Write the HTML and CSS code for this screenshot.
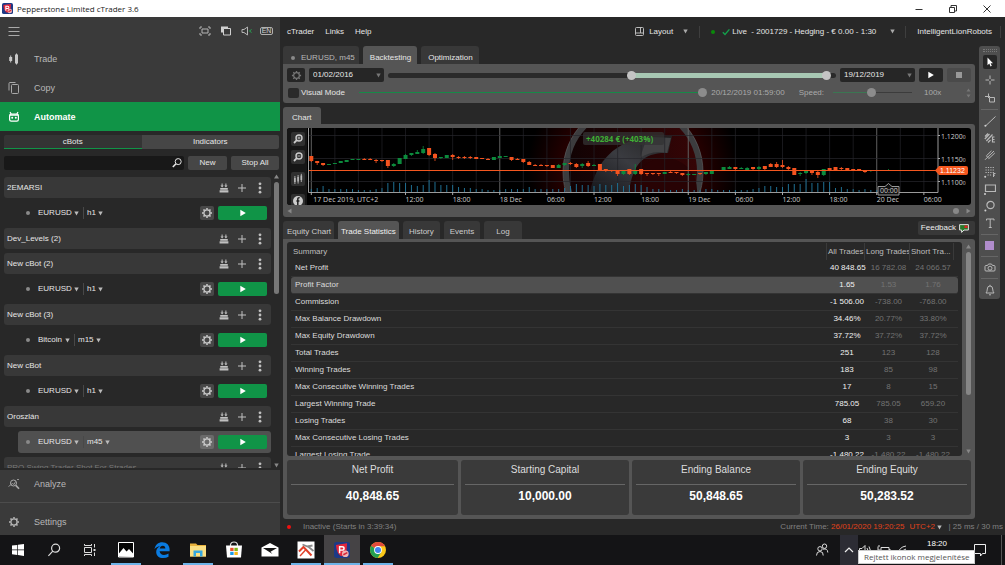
FILE: index.html
```
<!DOCTYPE html>
<html lang="en">
<head>
<meta charset="utf-8">
<title>Pepperstone Limited cTrader 3.6</title>
<link rel="stylesheet" href="styles.css">
</head>
<body>
<svg class="defs" aria-hidden="true">
  <symbol id="down" viewBox="0 0 5 5"><path d="M0.3 0.6H4.7L2.5 4.6Z" fill="currentColor"/></symbol>
  <symbol id="play" viewBox="0 0 6 8"><path d="M0.3 0.8L5.8 4L0.3 7.2Z" fill="currentColor"/></symbol>
  <symbol id="gear" viewBox="0 0 12 12"><g fill="none" stroke="currentColor"><circle cx="6" cy="6" r="3.1" stroke-width="1.3"/><path d="M6 1V2.6M6 9.4V11M1 6H2.6M9.4 6H11M2.5 2.5L3.6 3.6M8.4 8.4L9.5 9.5M9.5 2.5L8.4 3.6M3.6 8.4L2.5 9.5" stroke-width="1.5"/></g></symbol>
  <symbol id="bots" viewBox="0 0 10 10"><g fill="currentColor"><path d="M2.6 0.5H3.6V2.6H4.7L3.1 4.6L1.5 2.6H2.6ZM6.4 0.5H7.4V2.6H8.5L6.9 4.6L5.3 2.6H6.4Z"/><path d="M1.2 5H8.8V6.8H1.2ZM0.6 7.2H9.4V9.4H0.6Z"/></g></symbol>
  <symbol id="plus" viewBox="0 0 10 10"><path d="M5 1V9M1 5H9" stroke="currentColor" fill="none"/></symbol>
  <symbol id="dots" viewBox="0 0 4 12"><g fill="currentColor"><circle cx="2" cy="1.8" r="1.4"/><circle cx="2" cy="6" r="1.4"/><circle cx="2" cy="10.2" r="1.4"/></g></symbol>
  <symbol id="find" viewBox="0 0 12 12"><g fill="none" stroke="currentColor"><circle cx="7.2" cy="4.6" r="3"/><path d="M5 6.8L1.8 10" stroke-width="1.6"/></g></symbol>
  <symbol id="logo" viewBox="0 0 12 12"><rect width="12" height="12" rx="2" fill="#1d3a86"/><path d="M1.5 2.2L9.8 1L9.4 6.5C8.8 8.6 7 10 5.4 10.6C3 9.4 1.8 6.4 1.5 2.2Z" fill="#e3263b"/><path d="M4.2 8.4V3.6H6.1C8 3.6 8 6.1 6.1 6.1H4.4" fill="none" stroke="#fff" stroke-width="1.1"/><circle cx="8.5" cy="8.8" r="2.5" fill="#f0b4b4"/><path d="M7 9.6L10 8" stroke="#d6283a" stroke-width="1.2"/></symbol>
</svg>

<header class="titlebar">
  <svg class="s11"><use href="#logo"/></svg>
  <h1>Pepperstone Limited cTrader 3.6</h1>
  <div class="winbtns">
    <button type="button" aria-label="Minimize"><svg viewBox="0 0 10 10"><path d="M1.5 5.5H8.5"/></svg></button>
    <button type="button" aria-label="Restore"><svg viewBox="0 0 10 10"><path d="M1.5 3.5H6.5V8.5H1.5ZM3 3.5V1.5H8.5V7H6.5"/></svg></button>
    <button type="button" aria-label="Close"><svg viewBox="0 0 10 10"><path d="M1.5 1.5L8.5 8.5M8.5 1.5L1.5 8.5"/></svg></button>
  </div>
</header>

<div class="app">
  <aside class="sidebar">
    <div class="quick">
      <button type="button" aria-label="Menu"><svg viewBox="0 0 12 10"><path d="M0.5 1.5H11.5M0.5 5.5H11.5M0.5 9.5H11.5" stroke="#aaa"/></svg></button>
      <span class="grow"></span>
      <button type="button" aria-label="Full screen"><svg viewBox="0 0 12 10"><g fill="none" stroke="#b4b4b4"><path d="M3 3H9V7H3Z"/><path d="M1 3V1H3M9 1H11V3M11 7V9H9M3 9H1V7"/></g></svg></button>
      <button type="button" aria-label="Detach"><svg viewBox="0 0 12 10"><path d="M1 0.5H8V6.5H1Z" fill="#d0d0d0"/><path d="M3.5 2.5H10.5V9H3.5Z" fill="#3a3a3a" stroke="#d0d0d0"/></svg></button>
      <button type="button" aria-label="Sound"><svg viewBox="0 0 12 10"><path d="M1 3.5H3L6.5 1V9L3 6.5H1Z" fill="none" stroke="#b4b4b4"/><path d="M10.5 3Q8 5 10.5 7M8.4 4.3V5.7" fill="none" stroke="#2b8c4c"/></svg></button>
      <button type="button" class="lang">EN</button>
    </div>
    <nav class="nav">
      <a href="#"><svg viewBox="0 0 12 12"><path d="M1.2 4H4.2V8H1.2ZM2.2 2.5H3.2V9.5H2.2ZM7 1.5H10V10.5H7ZM8 0.5H9V11.5H8Z" fill="#c8c8c8"/></svg>Trade</a>
      <a href="#"><svg viewBox="0 0 12 12"><g fill="none" stroke="#a8a8a8"><rect x="3.5" y="2.5" width="7" height="9" rx="1"/><path d="M1 8.5V1.5Q1 0.5 2 0.5H7.5"/></g></svg>Copy</a>
      <a href="#" class="on"><svg viewBox="0 0 12 12"><rect x="1.6" y="3.2" width="8.8" height="7" rx="1.6" fill="none" stroke="#fff" stroke-width="1.2"/><path d="M2 1.2L3.2 3M10 1.2L8.8 3M1.8 4.2H10.2" stroke="#fff" stroke-width="1.2"/><circle cx="4.2" cy="6.8" r="1" fill="#fff"/><circle cx="7.8" cy="6.8" r="1" fill="#fff"/></svg>Automate</a>
    </nav>

    <section class="bots">
      <div class="segs"><button type="button" class="on">cBots</button><button type="button">Indicators</button></div>
      <div class="searchrow">
        <label class="search"><input type="search" aria-label="Search cBots"><svg><use href="#find"/></svg></label>
        <button type="button" class="b-new">New</button><button type="button" class="b-stop">Stop All</button>
      </div>
      <div class="scroller">
        <div class="list">
          <div class="bot"><span>2EMARSI</span><button type="button" aria-label="Build"><svg><use href="#bots"/></svg></button><button type="button" aria-label="Add instance"><svg><use href="#plus"/></svg></button><button type="button" aria-label="More"><svg><use href="#dots"/></svg></button></div>
          <div class="inst"><i class="dot"></i><label class="dd"><select aria-label="Symbol"><option>EURUSD</option></select><svg><use href="#down"/></svg></label><label class="dd tf"><select aria-label="Timeframe"><option>h1</option></select><svg><use href="#down"/></svg></label><button type="button" class="gear" aria-label="Settings"><svg><use href="#gear"/></svg></button><button type="button" class="run" aria-label="Start"><svg><use href="#play"/></svg></button></div>
          <div class="bot"><span>Dev_Levels (2)</span><button type="button" aria-label="Build"><svg><use href="#bots"/></svg></button><button type="button" aria-label="Add instance"><svg><use href="#plus"/></svg></button><button type="button" aria-label="More"><svg><use href="#dots"/></svg></button></div>
          <div class="bot"><span>New cBot (2)</span><button type="button" aria-label="Build"><svg><use href="#bots"/></svg></button><button type="button" aria-label="Add instance"><svg><use href="#plus"/></svg></button><button type="button" aria-label="More"><svg><use href="#dots"/></svg></button></div>
          <div class="inst"><i class="dot"></i><label class="dd"><select aria-label="Symbol"><option>EURUSD</option></select><svg><use href="#down"/></svg></label><label class="dd tf"><select aria-label="Timeframe"><option>h1</option></select><svg><use href="#down"/></svg></label><button type="button" class="gear" aria-label="Settings"><svg><use href="#gear"/></svg></button><button type="button" class="run" aria-label="Start"><svg><use href="#play"/></svg></button></div>
          <div class="bot"><span>New cBot (3)</span><button type="button" aria-label="Build"><svg><use href="#bots"/></svg></button><button type="button" aria-label="Add instance"><svg><use href="#plus"/></svg></button><button type="button" aria-label="More"><svg><use href="#dots"/></svg></button></div>
          <div class="inst"><i class="dot"></i><label class="dd"><select aria-label="Symbol"><option>Bitcoin</option></select><svg><use href="#down"/></svg></label><label class="dd tf"><select aria-label="Timeframe"><option>m15</option></select><svg><use href="#down"/></svg></label><button type="button" class="gear" aria-label="Settings"><svg><use href="#gear"/></svg></button><button type="button" class="run" aria-label="Start"><svg><use href="#play"/></svg></button></div>
          <div class="bot"><span>New cBot</span><button type="button" aria-label="Build"><svg><use href="#bots"/></svg></button><button type="button" aria-label="Add instance"><svg><use href="#plus"/></svg></button><button type="button" aria-label="More"><svg><use href="#dots"/></svg></button></div>
          <div class="inst"><i class="dot"></i><label class="dd"><select aria-label="Symbol"><option>EURUSD</option></select><svg><use href="#down"/></svg></label><label class="dd tf"><select aria-label="Timeframe"><option>h1</option></select><svg><use href="#down"/></svg></label><button type="button" class="gear" aria-label="Settings"><svg><use href="#gear"/></svg></button><button type="button" class="run" aria-label="Start"><svg><use href="#play"/></svg></button></div>
          <div class="bot"><span>Oroszlán</span><button type="button" aria-label="Build"><svg><use href="#bots"/></svg></button><button type="button" aria-label="Add instance"><svg><use href="#plus"/></svg></button><button type="button" aria-label="More"><svg><use href="#dots"/></svg></button></div>
          <div class="inst sel"><i class="dot"></i><label class="dd"><select aria-label="Symbol"><option>EURUSD</option></select><svg><use href="#down"/></svg></label><label class="dd tf"><select aria-label="Timeframe"><option>m45</option></select><svg><use href="#down"/></svg></label><button type="button" class="gear" aria-label="Settings"><svg><use href="#gear"/></svg></button><button type="button" class="run" aria-label="Start"><svg><use href="#play"/></svg></button></div>
          <div class="bot faded"><span>PRO Swing Trader Shot For Strades</span><button type="button" aria-label="Build"><svg><use href="#bots"/></svg></button><button type="button" aria-label="Add instance"><svg><use href="#plus"/></svg></button><button type="button" aria-label="More"><svg><use href="#dots"/></svg></button></div>
        </div>
        <div class="vbar"><svg viewBox="0 0 5 5"><path d="M0 4.5L2.5 0.5L5 4.5Z"/></svg><i class="side-thumb"></i><span class="grow"></span><svg><use href="#down"/></svg></div>
      </div>
    </section>

    <nav class="nav low">
      <a href="#" class="analyze"><svg viewBox="0 0 12 12"><g fill="none" stroke="#aaa"><circle cx="5.5" cy="5" r="3"/><path d="M7.8 7.4L11 10.8" stroke-width="1.6"/><path d="M0.5 8.5L4.5 5.5L6 6.5L7.5 3.5M9 1.5H11" stroke-width="0.8"/></g></svg>Analyze</a>
      <a href="#" class="settings"><svg><use href="#gear"/></svg>Settings</a>
    </nav>
  </aside>

  <main>
    <div class="menubar">
      <button type="button">cTrader</button><button type="button">Links</button><button type="button">Help</button>
      <span class="grow"></span>
      <button type="button" class="layout"><svg class="s9" viewBox="0 0 9 9"><path d="M0.5 1.5Q0.5 0.5 1.5 0.5H7.5Q8.5 0.5 8.5 1.5V7.5Q8.5 8.5 7.5 8.5H1.5Q0.5 8.5 0.5 7.5ZM5.5 0.5V6H0.5M5.5 6H8.5" fill="none" stroke="#bbb"/></svg>Layout<svg class="s5"><use href="#down"/></svg></button>
      <button type="button" class="account"><i class="live"></i><svg class="s8" viewBox="0 0 8 8"><path d="M0.8 4.2L3 6.4L7.4 1.4" fill="none" stroke="#14a04c" stroke-width="1.4"/></svg><span>Live &nbsp;- 2001729 - Hedging - € 0.00 - 1:30</span><svg class="s5"><use href="#down"/></svg></button>
      <button type="button" class="user">IntelligentLionRobots</button>
    </div>

    <div class="work">
      <div class="content">
        <div class="tabs">
          <button type="button" class="sym"><i class="dot"></i>EURUSD, m45</button><button type="button" class="on">Backtesting</button><button type="button">Optimization</button>
        </div>
        <section class="panel test">
          <div class="row">
            <button type="button" class="dark w18" aria-label="Test settings"><svg class="s11 dim"><use href="#gear"/></svg></button>
            <label class="date"><select aria-label="From date"><option>01/02/2016</option></select><svg class="s5"><use href="#down"/></svg></label>
            <div class="period"><input type="range" aria-label="Start of period" min="0" max="1000" value="544"><input type="range" aria-label="End of period" min="0" max="1000" value="988"></div>
            <label class="date"><select aria-label="To date"><option>19/12/2019</option></select><svg class="s5"><use href="#down"/></svg></label>
            <button type="button" class="dark w24" aria-label="Start backtest"><svg class="play"><use href="#play"/></svg></button>
            <button type="button" class="stop w24" aria-label="Stop backtest"><i></i></button>
          </div>
          <div class="row second">
            <label class="visual"><input type="checkbox">Visual Mode</label>
            <input type="range" class="progress" aria-label="Progress" value="100">
            <span>20/12/2019 01:59:00</span>
            <label class="speed">Speed:<input type="range" value="49"></label>
            <span class="rate">100x</span>
            <span class="spin"><svg viewBox="0 0 5 10"><path d="M0.5 3.5L2.5 0.5L4.5 3.5ZM0.5 6.5L2.5 9.5L4.5 6.5Z" fill="#777"/></svg></span>
          </div>
        </section>

        <div class="tabs charttab"><button type="button" class="on">Chart</button></div>
        <section class="panel chartpanel">
          <div class="chartbox">
            <div class="ctools">
              <button type="button" aria-label="Zoom in"><svg viewBox="0 0 12 12"><g fill="none" stroke="#ccc"><circle cx="7" cy="5" r="3" stroke-width="1.4"/><path d="M4.8 7.2L2 10" stroke-width="1.8"/><path d="M5.5 5H8.5M7 3.5V6.5" stroke-width="0.8"/></g></svg></button>
              <button type="button" aria-label="Zoom out"><svg viewBox="0 0 12 12"><g fill="none" stroke="#ccc"><circle cx="7" cy="5" r="3" stroke-width="1.4"/><path d="M4.8 7.2L2 10" stroke-width="1.8"/><path d="M5.5 5H8.5" stroke-width="0.8"/></g></svg></button>
              <button type="button" class="gap" aria-label="Chart type"><svg viewBox="0 0 12 12"><path d="M2 5H3.8V9H2ZM5.2 4H7V8.4H5.2ZM8.4 2.6H10.2V7H8.4Z" fill="#999"/><path d="M2.9 3V11M6.1 2V10.6M9.3 0.8V9" stroke="#ccc" stroke-width="0.8"/></svg></button>
              <button type="button" class="gap" aria-label="Share"><svg viewBox="0 0 12 12"><circle cx="6" cy="6" r="5" fill="#ccc"/><path d="M7.6 2.8C6.2 2.5 5.8 3.2 5.8 4.4V11M4.4 6H7.4" fill="none" stroke="#222" stroke-width="1.5"/></svg></button>
            </div>
            <svg id="chart" viewBox="0 0 664 77" role="img" aria-label="EURUSD backtest chart"></svg>
          </div>
          <div class="hbar"><svg viewBox="0 0 5 5"><path d="M4.5 0L0.5 2.5L4.5 5Z"/></svg><span class="grow"></span><i></i><svg viewBox="0 0 5 5"><path d="M0.5 0L4.5 2.5L0.5 5Z"/></svg></div>
        </section>

        <div class="tabs stattabs">
          <button type="button" class="t1">Equity Chart</button><button type="button" class="on t2">Trade Statistics</button><button type="button">History</button><button type="button">Events</button><button type="button">Log</button>
          <span class="grow"></span>
          <button type="button" class="feedback">Feedback<svg viewBox="0 0 10 9"><path d="M0.6 0.6H9.4V6H5L2.6 8.4V6H0.6Z" fill="#2a7a2a" stroke="#ddd"/><path d="M5.5 1.5H8.6V4H5.5Z" fill="#d22"/></svg></button>
        </div>
        <section class="panel stats">
          <div class="gridwrap">
            <div class="tablebox">
              <table>
                <colgroup><col><col class="c-all"><col class="c-long"><col class="c-short"><col class="c-end"></colgroup>
                <thead><tr><th>Summary</th><th>All Trades</th><th>Long Trades</th><th>Short Tra...</th><th></th></tr></thead>
                <tbody>
                  <tr><td>Net Profit</td><td>40 848.65</td><td>16 782.08</td><td>24 066.57</td><td></td></tr>
                  <tr class="hl"><td>Profit Factor</td><td>1.65</td><td>1.53</td><td>1.76</td><td></td></tr>
                  <tr><td>Commission</td><td>-1 506.00</td><td>-738.00</td><td>-768.00</td><td></td></tr>
                  <tr><td>Max Balance Drawdown</td><td>34.46%</td><td>20.77%</td><td>33.80%</td><td></td></tr>
                  <tr><td>Max Equity Drawdown</td><td>37.72%</td><td>37.72%</td><td>37.72%</td><td></td></tr>
                  <tr><td>Total Trades</td><td>251</td><td>123</td><td>128</td><td></td></tr>
                  <tr><td>Winning Trades</td><td>183</td><td>85</td><td>98</td><td></td></tr>
                  <tr><td>Max Consecutive Winning Trades</td><td>17</td><td>8</td><td>15</td><td></td></tr>
                  <tr><td>Largest Winning Trade</td><td>785.05</td><td>785.05</td><td>659.20</td><td></td></tr>
                  <tr><td>Losing Trades</td><td>68</td><td>38</td><td>30</td><td></td></tr>
                  <tr><td>Max Consecutive Losing Trades</td><td>3</td><td>3</td><td>3</td><td></td></tr>
                  <tr><td>Largest Losing Trade</td><td>-1 480.22</td><td>-1 480.22</td><td>-1 480.22</td><td></td></tr>
                </tbody>
              </table>
            </div>
            <div class="vbar"><svg viewBox="0 0 5 5"><path d="M0 4.5L2.5 0.5L5 4.5Z"/></svg><i class="stat-thumb"></i><span class="grow"></span><svg><use href="#down"/></svg></div>
          </div>
          <div class="cards">
            <div><h2>Net Profit</h2><b>40,848.65</b></div>
            <div><h2>Starting Capital</h2><b>10,000.00</b></div>
            <div><h2>Ending Balance</h2><b>50,848.65</b></div>
            <div><h2>Ending Equity</h2><b>50,283.52</b></div>
          </div>
        </section>
      </div>

      <div class="tools">
        <div class="grip"></div>
        <button type="button" class="on" aria-label="Pointer"><svg viewBox="0 0 12 12"><path d="M3.5 1.5V9.2L5.3 7.6L6.6 10.4L7.8 9.8L6.6 7.2H9Z" fill="#fff"/></svg></button>
        <button type="button" aria-label="Crosshair"><svg viewBox="0 0 12 12"><path d="M6 1.5V5M6 7V10.5M1.5 6H5M7 6H10.5"/></svg></button>
        <button type="button" aria-label="Marker"><svg viewBox="0 0 12 12"><path d="M4.5 1.5V6M1 4.5H6M5.5 5.5H10.5V10H5.5Z"/></svg></button>
        <hr>
        <div class="draws">
          <button type="button" aria-label="Line"><svg viewBox="0 0 12 12"><path d="M2 10.5L11.5 1.5"/><circle cx="1.4" cy="10.8" r="1" class="f"/></svg></button>
          <button type="button" aria-label="Channel"><svg viewBox="0 0 12 12"><path d="M0.8 7L5.5 2M2.4 9L8.5 2.5M4 10.5L6.5 8M1 4.5L4 1.5M10.5 5H8.5V10H11M8.5 7.5H10.5" stroke-width="1.2"/></svg></button>
          <button type="button" aria-label="Pitchfork"><svg viewBox="0 0 12 12"><path d="M1 10.8L3.5 8.3M2.4 6.8L7.5 1.8M3.5 8.3L10 2M4.8 9.6L10.8 4M2.4 6.8L4.8 9.6"/></svg></button>
          <button type="button" aria-label="Fibonacci"><svg viewBox="0 0 12 12"><path d="M1.5 1.5H11M1.5 4H11M1.5 6.5H11M3.5 9H8" stroke-dasharray="1.2 1.2"/><path d="M9.5 11V7.5H11.5M9.5 9.2H11"/><circle cx="1.2" cy="10.8" r="1" class="f"/></svg></button>
          <button type="button" aria-label="Rectangle"><svg viewBox="0 0 12 12"><path d="M1.5 2H11.5V8.5H1.5Z" stroke-width="1.2"/><circle cx="1" cy="11" r="1" class="f"/></svg></button>
          <button type="button" aria-label="Ellipse"><svg viewBox="0 0 12 12"><circle cx="6.5" cy="5" r="3.6" stroke-width="1.2"/><circle cx="1.4" cy="10.6" r="1" class="f"/></svg></button>
          <button type="button" aria-label="Text"><svg viewBox="0 0 12 12"><path d="M2.5 3.5V2H10V3.5M6.2 2V10.5M4.8 10.5H7.7"/></svg></button>
        </div>
        <hr>
        <button type="button" aria-label="Colour"><i class="swatch"></i></button>
        <hr>
        <button type="button" aria-label="Snapshot"><svg viewBox="0 0 12 12"><path d="M1 4.5Q1 3.5 2 3.5H3.5L4.5 2H7.5L8.5 3.5H10Q11 3.5 11 4.5V8Q11 9 10 9H2Q1 9 1 8Z"/><circle cx="6" cy="6.2" r="2"/></svg></button>
        <hr>
        <button type="button" aria-label="Alerts"><svg viewBox="0 0 12 12"><path d="M2 9H10Q8.7 7.5 8.7 5Q8.7 2 6 2Q3.3 2 3.3 5Q3.3 7.5 2 9ZM5 10.8H7M6 2V0.8"/></svg></button>
      </div>
    </div>

    <footer class="status">
      <i class="red"></i><span>Inactive (Starts in 3:39:34)</span>
      <span class="grow"></span>
      <span>Current Time: <em>26/01/2020 19:20:25</em></span>
      <label class="dd zone"><select aria-label="Time zone"><option>UTC+2</option></select><svg><use href="#down"/></svg></label>
      <span>| 25 ms / 30 ms</span>
    </footer>
  </main>
</div>

<footer class="taskbar">
  <button type="button" aria-label="Start"><svg viewBox="0 0 16 16"><path d="M2 3.6L7.3 2.9V7.6H2ZM8 2.8L14 2V7.6H8ZM2 8.3H7.3V13L2 12.3ZM8 8.3H14V14L8 13.1Z" fill="#fff"/></svg></button>
  <button type="button" aria-label="Search"><svg viewBox="0 0 16 16"><g fill="none" stroke="#ddd" stroke-width="1.2"><circle cx="9.6" cy="6.2" r="4"/><path d="M6.8 9.2L2.4 13.8"/></g></svg></button>
  <button type="button" aria-label="Task view"><svg viewBox="0 0 16 16"><g fill="none" stroke="#ddd"><path d="M2.5 5.5H9.5V10.5H2.5ZM2.5 2V3.5H9.5V2M2.5 14V12.5H9.5V14M12.5 2V5.5M12.5 10.5V14"/></g><path d="M11.5 7H13.5V9H11.5Z" fill="#ddd"/></svg></button>
  <button type="button" class="open" aria-label="Photos"><svg class="s18" viewBox="0 0 18 18"><path d="M1.5 1.5H16.5V16H1.5Z" fill="#050505" stroke="#fff"/><path d="M1.5 15.5V13L6.5 7L9.5 10.5L12 8L16.5 13V16Z" fill="#fff"/></svg></button>
  <button type="button" aria-label="Edge"><svg class="s18" viewBox="0 0 18 18"><path d="M1.5 8.2C2.2 3.8 5.4 1.2 9.2 1.2C13.8 1.2 16.6 4.4 16.6 8.6V10.3H6.6C6.8 12.8 8.8 13.9 11 13.9C12.8 13.9 14.2 13.4 15.5 12.6V15.8C14 16.6 12.2 17 10.2 17C6 17 3.2 14.6 3.2 10.9C3.2 8.2 4.8 6.2 7 5.2C4.6 5.4 2.7 6.5 1.5 8.2ZM6.7 7.6H12.4C12.4 5.8 11.4 4.7 9.8 4.7C8.2 4.7 7 5.8 6.7 7.6Z" fill="#0a7be0"/></svg></button>
  <button type="button" class="open" aria-label="File Explorer"><svg class="s18" viewBox="0 0 18 18"><path d="M1 2.5H7L8.5 4H17V15.5H1Z" fill="#e9b23c"/><path d="M1 5H17V15.5H1Z" fill="#fbdf83"/><path d="M4.5 15.5V9.5H13.5V15.5H11V12H7V15.5Z" fill="#35a7e0"/></svg></button>
  <button type="button" aria-label="Store"><svg class="s18" viewBox="0 0 18 18"><path d="M5.5 5V3.5Q6 1 9 1T12.5 3.5V5" fill="none" stroke="#ddd" stroke-width="1.2"/><path d="M1 4.5H17L16 16.5H2Z" fill="#fff"/><path d="M5.2 6.8H8.6V10H5.2Z" fill="#e8502a"/><path d="M9.4 6.8H12.8V10H9.4Z" fill="#7cb518"/><path d="M5.2 10.8H8.6V14H5.2Z" fill="#1c9be8"/><path d="M9.4 10.8H12.8V14H9.4Z" fill="#f8b616"/></svg></button>
  <button type="button" aria-label="Mail"><svg class="s18" viewBox="0 0 18 18"><path d="M0.5 6.5L9 2L17.5 6.5V15.5H0.5Z" fill="#fff"/><path d="M2 7H16L9.5 10.8L11.5 13Z" fill="#141414"/></svg></button>
  <button type="button" class="open" aria-label="Tools"><svg class="s18" viewBox="0 0 18 18"><path d="M0.5 0.5H17.5V17.5H0.5Z" fill="#fff"/><path d="M2 10.5L6.5 6L14.5 14.5" fill="none" stroke="#e0402a" stroke-width="2"/><path d="M5.5 3.5L10.5 5.5L15.5 4.5M10.5 5L16.5 10" fill="none" stroke="#8a8a8a" stroke-width="1.8"/><path d="M3 15L9 8.5" stroke="#e0402a" stroke-width="1.4"/></svg></button>
  <button type="button" class="open cur" aria-label="cTrader"><svg class="s16"><use href="#logo"/></svg></button>
  <button type="button" class="open" aria-label="Chrome"><svg class="s18" viewBox="0 0 18 18"><circle cx="9" cy="9" r="8" fill="#fbc819"/><path d="M9 9L2.1 5A8 8 0 0 1 16 5.2H9Z" fill="#e04a3c"/><path d="M2.1 5A8 8 0 0 0 8.6 17L12.4 11L9 9Z" fill="#24a052"/><circle cx="9" cy="9" r="3.9" fill="#fff"/><circle cx="9" cy="9" r="3" fill="#3f83ee"/></svg></button>
  <span class="grow"></span>
  <div class="tray">
    <button type="button" aria-label="People"><svg viewBox="0 0 16 16"><g fill="none" stroke="#ddd"><circle cx="6" cy="6.8" r="2.2"/><path d="M2.5 13.5Q2.5 9.5 6 9.5T9.2 13.5"/><circle cx="10.5" cy="4.2" r="2.2"/><path d="M9 7.2Q13.6 6 13.8 10.5"/></g></svg></button>
    <div class="more">
      <button type="button" class="chev" aria-label="Show hidden icons"><svg class="s10" viewBox="0 0 10 10"><path d="M1 7L5 3L9 7" fill="none" stroke="#eee" stroke-width="1.2"/></svg></button>
      <div class="tip" role="tooltip">Rejtett ikonok megjelenítése</div>
    </div>
    <svg viewBox="0 0 16 16"><path d="M1.5 6.5H4L7 3.5V12.5L4 9.5H1.5ZM9 6Q10.5 8 9 10M11 4.5Q13.5 8 11 11.5" fill="none" stroke="#ddd"/></svg>
    <svg viewBox="0 0 16 16"><path d="M5 5.5H13V11H5ZM2 4.5V8H4.5M3 3V5M13 7.5H14.5" fill="none" stroke="#ddd"/></svg>
    <svg viewBox="0 0 16 16"><path d="M4 12Q5 5 12 4M7 12Q7.5 8 12 7M10 12Q10 10.5 12 10" fill="none" stroke="#ddd"/></svg>
    <time>18:20</time>
    <button type="button" class="note" aria-label="Notifications"><svg viewBox="0 0 16 16"><path d="M2.5 2.5H13.5V11.5H10.5L8.5 14V11.5H2.5Z" fill="none" stroke="#eee"/></svg></button>
    <i class="peek"></i>
  </div>
</footer>
<script src="chart.js"></script>
</body>
</html>
```
FILE: styles.css
```
* { box-sizing: border-box; }
body {
  margin: 0;
  height: 100vh;
  display: flex;
  flex-direction: column;
  overflow: hidden;
  background: #282828;
  color: #e6e6e6;
  font: 8px/12px "Liberation Sans", Arial, sans-serif;
}
button, select, input { font: inherit; color: inherit; margin: 0; }
button {
  display: flex;
  align-items: center;
  justify-content: center;
  padding: 0;
  border: 0;
  background: none;
  white-space: nowrap;
}
select { appearance: none; border: 0; background: none; padding: 0; }
a { color: inherit; text-decoration: none; }
svg { display: block; flex: none; }
.defs { position: absolute; width: 0; height: 0; }
.grow { flex: 1; }
.s5 { width: 5px; height: 5px; color: #aaa; }
.s8 { width: 8px; height: 8px; }
.s9 { width: 9px; height: 9px; }
.s10 { width: 10px; height: 10px; }
.s11 { width: 11px; height: 11px; }
.s16 { width: 16px; height: 16px; }
.dot { width: 4px; height: 4px; border-radius: 50%; background: #8a8a8a; flex: none; }

/* title bar */
.titlebar {
  height: 17px;
  flex: none;
  display: flex;
  align-items: center;
  gap: 4px;
  padding: 0 1px 0 2px;
  background: #fff;
  color: #222;
}
.titlebar h1 { margin: 0; font: 8px/12px "Open Sans", sans-serif; }
.winbtns { display: flex; margin-left: auto; }
.winbtns button { width: 34px; height: 16px; }
.winbtns svg { width: 10px; height: 10px; fill: none; stroke: #333; }

.app { flex: 1; min-height: 0; display: flex; }

/* sidebar */
.sidebar { width: 280px; flex: none; display: flex; flex-direction: column; background: #3a3a3a; }
.quick { display: flex; align-items: center; gap: 9px; height: 27px; padding: 0 7px 0 8px; flex: none; }
.quick svg { width: 12px; height: 10px; }
.lang { width: 13px; height: 8px; margin-left: -2px; border: 1px solid #b0b0b0; border-radius: 2px; font-size: 7px; line-height: 6px; color: #d0d0d0; }
.nav { flex: none; font-size: 9px; color: #b8b8b8; }
.nav a { display: flex; align-items: center; gap: 14px; height: 29px; padding-left: 8px; }
.nav svg { width: 12px; height: 12px; }
.nav .on { background: #109447; color: #fff; font-weight: bold; }
.nav .analyze { height: 33px; padding-bottom: 4px; border-bottom: 1px solid #4c4c4c; }
.nav .settings { height: 32px; padding-top: 5px; color: #b8b8b8; }
.bots { flex: 1; min-height: 0; display: flex; flex-direction: column; background: #282828; padding: 4px 1px 0 4px; }
.segs { display: grid; grid-template-columns: 1fr 1fr; flex: none; }
.segs button { height: 14px; background: #464646; border-radius: 0 2px 2px 0; }
.segs .on { background: #343434; border-bottom: 1px solid #109447; border-radius: 2px 0 0 0; }
.searchrow { display: flex; gap: 4px; margin-top: 7px; flex: none; }
.searchrow button { height: 14px; background: #464646; border-radius: 2px; }
.b-new { width: 39px; }
.b-stop { width: 48px; }
.search { flex: 1; display: flex; align-items: center; background: #181818; border-radius: 2px; padding-right: 1px; }
.search input { flex: 1; min-width: 0; height: 14px; border: 0; background: none; padding: 0 4px; outline: 0; }
.search svg { width: 12px; height: 12px; }
.scroller { flex: 1; min-height: 0; display: flex; gap: 3px; padding: 4px 0 2px; }
.list { flex: 1; display: flex; flex-direction: column; gap: 4px; padding-top: 3px; overflow: hidden; }
.bot { height: 21px; flex: none; display: flex; align-items: center; gap: 6px; padding: 0 5px 0 3px; background: #383838; border-radius: 3px; }
.bot span { flex: 1; }
.bot button { width: 12px; color: #c0c0c0; }
.bot svg { width: 10px; height: 12px; }
.faded { color: #777; }
.inst { height: 22px; flex: none; display: flex; align-items: center; margin-left: 14px; padding: 0 4px 0 8px; border-radius: 3px; }
.inst .dot { margin-right: 8px; }
.sel { background: #505050; }
.dd { display: flex; align-items: center; gap: 2px; }
.dd svg { width: 5px; height: 5px; color: #bbb; }
.tf { margin-left: 4px; padding-left: 3px; border-left: 1px solid #484848; }
.gear { width: 14px; height: 14px; margin-left: auto; background: #484848; border-radius: 2px; color: #ccc; }
.sel .gear { background: #6a6a6a; }
.gear svg { width: 12px; height: 12px; }
.run { width: 49px; height: 14px; margin-left: 4px; background: #109447; border-radius: 2px; color: #fff; }
.run svg, .play { width: 6px; height: 8px; color: #fff; }
.vbar { width: 5px; display: flex; flex-direction: column; align-items: center; fill: #888; color: #888; }
.vbar svg { width: 5px; height: 5px; }
.side-thumb { width: 5px; height: 38%; margin-top: 3px; border-radius: 3px; background: #777; }

/* menu bar */
main { flex: 1; min-width: 0; display: flex; flex-direction: column; }
.menubar { height: 29px; flex: none; display: flex; align-items: center; padding: 0 4px 0 7px; gap: 11px; }
.menubar .layout { gap: 5px; padding-right: 11px; border-right: 1px solid #3e3e3e; }
.layout .s5 { margin-left: 5px; }
.account { gap: 2px; padding-right: 10px; border-right: 1px solid #3e3e3e; }
.live { width: 4px; height: 4px; border-radius: 50%; background: #0a8a0a; margin-right: 5px; }
.account .s5 { margin-left: 12px; }
.user { padding-right: 8px; border-right: 1px solid #3e3e3e; }
.work { flex: 1; min-height: 0; display: flex; align-items: flex-start; gap: 4px; padding: 0 5px 0 3px; }
.content { flex: 1; min-width: 0; height: 100%; display: flex; flex-direction: column; }

/* tabs and panels */
.tabs { display: flex; gap: 4px; flex: none; }
.tabs button { height: 18px; padding: 5px 6px 0 7px; background: #383838; border-radius: 3px 3px 0 0; }
.tabs .on { background: #555; }
.tabs .sym { gap: 6px; padding-left: 8px; padding-right: 4px; color: #b8b8b8; }
.charttab { margin-top: 4px; }
.charttab button { height: 17px; padding: 4px 9px 0; }
.panel { background: #555; border-radius: 0 3px 3px 3px; flex: none; }
.test { padding: 4px; }
.row { display: flex; align-items: center; gap: 4px; }
.row button { height: 14px; border-radius: 2px; }
.dark { background: #262626; }
.w18 { width: 18px; }
.w24 { width: 24px; }
.dim { color: #777; }
.stop { background: #4a4a4a; }
.stop i { width: 6px; height: 6px; background: #999; }
.date { display: flex; align-items: center; width: 75px; height: 14px; padding: 0 3px 0 4px; background: #262626; border-radius: 2px; }
.date select { flex: 1; }
.date .s5 { color: #777; }
.period { flex: 1; display: grid; align-items: center; }
input[type="range"] { appearance: none; height: 9px; background: none; pointer-events: none; }
input[type="range"]::-webkit-slider-thumb { appearance: none; width: 9px; height: 9px; border-radius: 50%; background: #8c8c8c; pointer-events: auto; }
.period input[type="range"] { grid-area: 1 / 1; width: 100%; }
.period input[type="range"]::-webkit-slider-thumb { background: #c4c4c4; }
.period::before { content: ""; grid-area: 1 / 1; height: 5px; border-radius: 3px; background: linear-gradient(90deg, #2a2a2a 54%, #a8c8b4 54%, #a8c8b4 98%, #2a2a2a 98%); }
.second { margin-top: 4px; height: 13px; color: #aaa; }
.visual { display: flex; align-items: center; gap: 2px; color: #e6e6e6; }
.visual input { appearance: none; width: 11px; height: 10px; margin-left: 1px; border-radius: 2px; background: #2a2a2a; }
.second .progress { flex: 1; min-width: 0; margin-left: 10px; background: linear-gradient(#168a48, #168a48) center / 100% 1px no-repeat; }
.speed { display: flex; align-items: center; gap: 9px; margin-left: 10px; }
.speed input[type="range"] { width: 79px; background: linear-gradient(90deg, #3b7652 50%, #3c3c3c 50%) center / 100% 1px no-repeat; }
.rate { margin-left: 8px; width: 34px; }
.spin svg { width: 5px; height: 10px; margin-left: 4px; }
.spin { width: 9px; }

/* chart */
.chartpanel { padding: 4px 4px 0; }
.chartbox { height: 77px; display: flex; background: #000; border-radius: 3px; overflow: hidden; }
.ctools { width: 20px; flex: none; padding: 4px 2px 0 4px; background: #161616; display: flex; flex-direction: column; gap: 4px; }
.ctools button { height: 14px; flex: none; background: #303030; border-radius: 2px; }
.ctools .gap { margin-top: 4px; }
.ctools svg { width: 12px; height: 12px; }
#chart { flex: 1; min-width: 0; height: 77px; font: 7px "Open Sans", sans-serif; fill: #ccc; }
#chart .profit { font: bold 8px "Open Sans", sans-serif; fill: #3fae35; }
#chart .now { font: 7px "Liberation Sans", sans-serif; fill: #fff; }
#chart .tiny { font-size: 5px; }
.hbar { height: 12px; display: flex; align-items: center; gap: 7px; }
.hbar svg { width: 5px; height: 6px; fill: #888; }
.hbar i { width: 6px; height: 6px; border-radius: 50%; background: #888; }

/* statistics */
.stattabs { margin-top: 4px; }
.stattabs button { padding: 3px 6px 0; color: #ccc; }
.stattabs .t1 { padding: 3px 3px 0 4px; }
.stattabs .t2 { padding: 3px 3px 0; }
.stattabs .on { color: #f0f0f0; }
.stattabs button:nth-of-type(5) { padding: 3px 12px 0; }
.stattabs .feedback { height: 14px; padding: 0 6px 0 3px; border-radius: 2px; gap: 3px; color: #eee; }
.feedback svg { width: 10px; height: 9px; }
.stats { flex: 1; min-height: 0; padding: 3px 0 4px 4px; display: flex; flex-direction: column; gap: 4px; }
.gridwrap { flex: 1; min-height: 0; display: flex; }
.tablebox { flex: 1; overflow: hidden; background: #282828; border-radius: 3px; padding: 1px 4px 0; }
.gridwrap .vbar { width: 13px; padding: 2px 0; }
.stat-thumb { width: 5px; height: 68%; margin-top: 3px; border-radius: 3px; background: #868686; }
table { width: 100%; table-layout: fixed; border-collapse: separate; border-spacing: 0; }
.c-all { width: 38px; }
.c-long { width: 45px; }
.c-short { width: 44px; }
.c-end { width: 5px; }
th { height: 17px; padding: 0 0 0 2px; text-align: left; font-weight: normal; white-space: nowrap; overflow: hidden; color: #bdbdbd; }
th + th { border-left: 1px solid #3a3a3a; padding: 0 1px; }
td { height: 17px; padding: 0 0 0 4px; white-space: nowrap; border-bottom: 1px solid #343434; color: #737373; text-align: center; }
td:first-child { text-align: left; color: #dcdcdc; }
td:nth-child(2) { color: #f0f0f0; }
td:last-child { padding: 0; }
.hl td { background: #505050; }
.hl td:first-child { border-radius: 3px 0 0 3px; }
.hl td:last-child { border-radius: 0 3px 3px 0; }
.cards { display: grid; grid-template-columns: 171fr 168fr 168fr 168fr; gap: 3px; padding-right: 4px; flex: none; }
.cards div { height: 55px; padding: 0 4px; background: #3a3a3a; border-radius: 3px; text-align: center; }
.cards h2 { margin: 0 0 5px; padding: 3px 0 8px; font: 10px/13px "Liberation Sans", sans-serif; color: #ddd; border-bottom: 1px solid #666; }
.cards b { font-size: 12px; color: #fff; }

/* drawing tools */
.tools { width: 21px; flex: none; display: flex; flex-direction: column; align-items: center; background: #4e4e4e; border-radius: 3px; padding-bottom: 1px; }
.tools button { width: 14px; height: 18px; }
.tools .on { height: 14px; margin: 2px 0; background: #262626; border-radius: 2px; }
.tools hr ~ button { height: 17px; }
.tools svg { width: 12px; height: 12px; fill: none; stroke: #b8b8b8; }
.tools .on svg { stroke: none; }
.tools .f { fill: #d0d0d0; stroke: none; }
.tools hr { width: 17px; margin: 2px 0; border: 0; border-top: 1px solid #666; }
.grip { width: 14px; height: 3px; margin: 3px 0 1px; border: 1px dotted #777; border-width: 1px 0; }
.draws { height: 120px; display: flex; flex-direction: column; }
.draws button { flex: 1; }
.swatch { width: 9px; height: 9px; background: #b08ccc; }

/* status line */
.status { height: 16px; flex: none; display: flex; align-items: center; padding: 0 2px 0 7px; color: #808080; }
.red { width: 4px; height: 4px; margin-right: 12px; border-radius: 50%; background: #f01010; }
.status em, .zone { font-style: normal; color: #e0421a; }
.zone { margin: 0 6px 0 5px; }

/* taskbar */
.taskbar { height: 30px; flex: none; display: flex; background: #141416; }
.taskbar > button { width: 36px; height: 30px; border: solid transparent; border-width: 0 3px; }
.taskbar svg { width: 16px; height: 16px; }
.taskbar .s18 { width: 18px; height: 18px; }
.taskbar .open { background: linear-gradient(#6db3e8, #6db3e8) bottom / 100% 2px no-repeat padding-box; }
.taskbar .cur { border: 0; background-color: #454345; }
.tray { display: flex; align-items: center; }
.more { position: relative; width: 18px; margin-left: 10px; }
.chev { width: 18px; height: 30px; background: #2c2c34; }
.taskbar .s10 { width: 10px; height: 10px; }
.tip { position: absolute; left: 18px; top: 15px; padding: 0 5px; background: #fff; border: 1px solid #ccc; color: #555; font: 8px/12px "Open Sans", sans-serif; white-space: nowrap; }
.tray > svg { margin-right: 2px; }
.tray time { width: 50px; height: 28px; text-align: center; font: 8px/16px "Liberation Sans", sans-serif; color: #fff; }
.note { width: 36px; }
.peek { width: 1px; height: 30px; margin: 0 3px; background: #555; }
```
FILE: chart.js
```
// Candle: direction (u/d), body top, body bottom, high, low, volume.
const candles = `d 28 33 28 34 3|d 33 35 33 37 4|d 35 37 35 38 6|u 36 37 36 37 3|u 35 36 35 36 3|u 33 35 33 35 3|u 32 34 32 34 3|u 31 32 31 32 3|u 31 32 31 32 2|d 31 32 30 32 2|d 31 32 30 32 2|d 32 33 31 35 3|d 32 33 32 34 4|d 32 38 32 40 9|u 36 38 35 39 10|u 30 36 30 36 9|u 27 31 26 31 9|u 25 27 25 28 7|u 24 26 22 26 6|u 21 25 18 26 7|d 20 27 20 28 12|d 26 30 25 33 10|u 29 30 29 31 7|u 27 30 27 30 7|d 27 29 26 32 7|d 29 30 28 31 5|d 29 30 28 31 4|d 29 30 28 31 4|d 29 31 29 31 3|d 30 31 30 31 3|d 31 32 30 32 2|u 29 32 29 32 2|u 28 30 28 30 2|u 28 29 28 29 3|d 29 32 29 33 3|d 31 32 30 32 3|d 31 34 31 35 3|d 34 37 33 37 5|d 37 38 36 38 3|d 37 38 36 38 3|d 37 38 37 39 3|d 37 40 37 40 3|u 37 40 36 40 3|u 35 37 35 38 4|d 35 36 34 37 6|d 36 39 35 40 8|u 36 38 35 40 7|d 35 38 33 39 7|u 37 38 36 38 6|d 36 42 36 42 8|d 41 43 41 44 7|d 42 43 42 44 7|d 42 46 42 48 9|u 43 46 43 47 6|d 41 46 41 47 7|u 42 46 36 47 8|d 41 46 41 47 7|d 45 46 45 48 5|d 45 46 45 47 3|d 45 46 45 48 3|u 44 46 44 46 2|d 44 45 43 45 2|d 44 45 44 46 2|d 45 47 45 48 3|u 46 47 45 48 2|u 46 47 46 47 2|d 45 46 45 47 2|u 44 46 44 47 3|u 43 46 42 46 3|u 42 43 42 43 2|u 39 42 39 42 2|u 39 41 38 41 2|d 39 41 39 42 2|u 40 41 39 41 2|u 40 42 39 42 2|d 39 41 39 42 3|u 39 41 38 42 4|d 38 41 38 43 6|d 36 39 35 39 6|d 36 39 34 40 5|d 37 39 32 40 5|d 39 41 38 42 8|d 40 47 40 47 8|u 45 46 44 48 8|u 43 45 43 46 13|d 43 45 42 47 9|d 44 47 43 50 9|u 41 47 41 48 10|d 40 42 40 43 10|d 39 42 39 42 4|d 40 41 39 42 5|d 40 42 40 42 3|d 41 42 41 42 3|d 41 43 41 43 2|d 42 44 42 45 3|u 42 43 42 44 2|u 42 43 42 43 2|u 42 43 42 43 0|u 42 43 41 43 0`
  .split("|").map(c => c.split(" "));
const step = 5.89, first = 4.3, axis = 64;
const at = i => first + i * step;
let out = `
<defs>
  <radialGradient id="glow" gradientUnits="userSpaceOnUse" cx="326" cy="44" r="106"><stop offset="0.55" stop-color="#300000"/><stop offset="1" stop-color="#000"/></radialGradient>
  <linearGradient id="inner" x1="0" x2="1"><stop offset="0" stop-color="#100203"/><stop offset="1" stop-color="#360506"/></linearGradient>
  <linearGradient id="disc" x1="0" y1="1" x2="1" y2="0"><stop offset="0" stop-color="#15161a"/><stop offset="0.5" stop-color="#3a3b40"/><stop offset="1" stop-color="#222"/></linearGradient>
  <clipPath id="plot"><rect x="1" width="629" height="64"/></clipPath>
</defs>
<g clip-path="url(#plot)">
  <rect x="220" width="212" height="64" fill="url(#glow)"/>
  <circle cx="326" cy="44" r="66" fill="url(#inner)"/>
  <circle cx="326" cy="44" r="67" fill="none" stroke="#3c3c3e" stroke-width="6"/>
  <circle cx="326" cy="44" r="70" fill="none" stroke="#5a5a5c" stroke-width="0.7"/>
  <path d="M283 64C290 32 308 14 340 9L365 8L361 25C338 24 326 34 322 64Z" fill="url(#disc)"/>
  <path d="M340 9L364 10L360 25Q344 22 333 30Z" fill="#424244"/>
  <circle cx="358" cy="62" r="32" fill="#280304"/>
</g>`;
for (let i = 0; i <= 104; i += 4) {
  const day = i % 32 === 0;
  out += `<path d="M${at(i)} 0V${axis}" stroke="${day ? "#606060" : "#222228"}" stroke-width="${day ? 1 : 0.7}"/>`;
}
for (const y of [7.5, 30.5, 53.5]) out += `<path d="M1 ${y}H631" stroke="#26262c" stroke-width="0.7"/><path d="M631 ${y}H633" stroke="#aaa"/>`;
candles.forEach(([dir, top, bottom, high, low, vol], i) => {
  const color = dir === "u" ? "#0c8a3c" : "#f4531f", x = at(i);
  out += `<path d="M${x} ${axis}V${axis - vol}" stroke="#1f6f92"/>`
    + `<path d="M${x} ${high}V${low}" stroke="${color}" stroke-width="0.8"/>`
    + `<rect x="${x - 2}" y="${top}" width="4" height="${bottom - top}" fill="${color}"/>`;
});
out += `
<rect x="1" y="42" width="630" height="1" fill="#f4571f"/>
<path d="M1.5 0V${axis}.5H631V0" fill="none" stroke="#9a9a9a"/>
<rect x="276" y="4" width="81" height="13" rx="2" fill="#333" fill-opacity="0.75"/>
<text class="profit" x="279" y="14">+40284 € (+403%)</text>`;
[[0, "17 Dec 2019, UTC+2"], [16, "12:00"], [24, "18:00"], [32, "18 Dec"], [40, "06:00"], [48, "12:00"], [56, "18:00"], [64, "19 Dec"], [72, "06:00"], [80, "12:00"], [88, "18:00"], [96, "20 Dec"], [104, "06:00"]]
  .forEach(([i, label]) => { out += `<path d="M${at(i)} ${axis}V67" stroke="#aaa"/><text x="${at(i) + (i ? 0 : 2)}" y="74">${label}</text>`; });
[[11, "1.1200"], [34, "1.1150"], [57, "1.1100"]]
  .forEach(([y, label]) => { out += `<text x="634" y="${y}">${label}<tspan class="tiny">0</tspan></text>`; });
out += `
<path d="M628 42.5L632 38H659Q661 38 661 40V45Q661 47 659 47H632Z" fill="#f4571f"/>
<text class="now" x="633" y="45">1.11232</text>
<path d="M571 67V58.5H578L581.5 55.5L585 58.5H592V67Z" fill="#111" stroke="#999"/>
<text x="573" y="65">00:00</text>`;
document.getElementById("chart").innerHTML = out;
```
